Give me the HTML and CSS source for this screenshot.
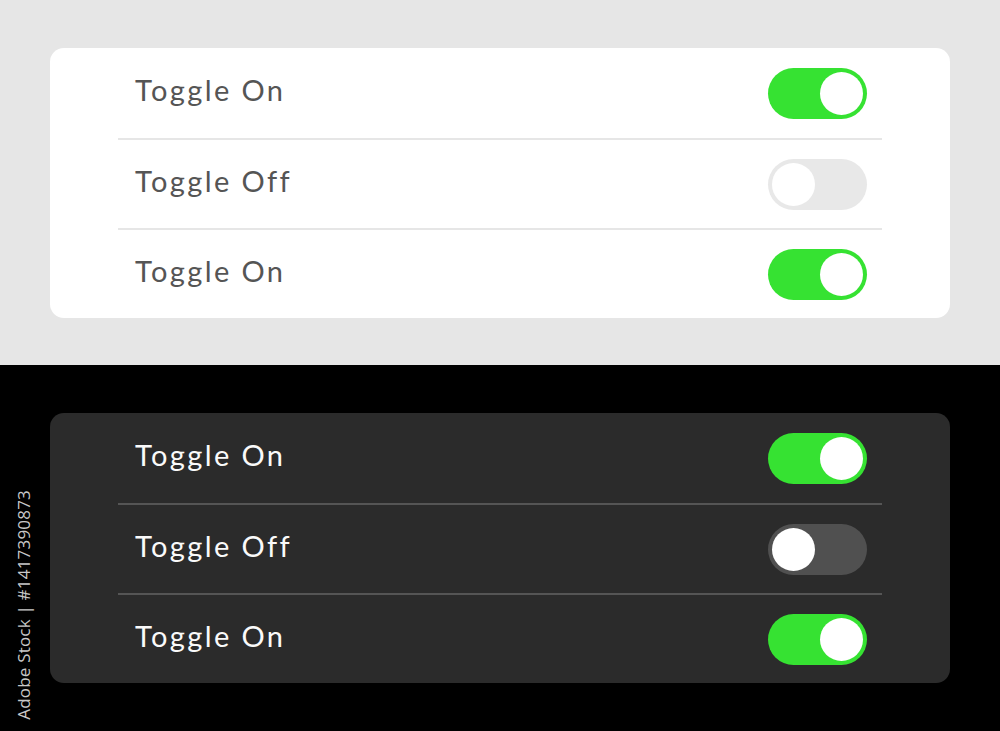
FILE: index.html
```html
<!DOCTYPE html>
<html lang="en">
<head>
    <meta charset="UTF-8">
    <title>Toggle Switches</title>
    <link rel="stylesheet" href="styles.css">
</head>
<body>
    <div class="theme light">
        <div class="card">
            <div class="row">
                <span class="label">Toggle On</span>
                <span class="switch on"><span class="knob"></span></span>
            </div>
            <div class="row">
                <span class="label">Toggle Off</span>
                <span class="switch"><span class="knob"></span></span>
            </div>
            <div class="row">
                <span class="label">Toggle On</span>
                <span class="switch on"><span class="knob"></span></span>
            </div>
        </div>
    </div>

    <div class="theme dark">
        <div class="card">
            <div class="row">
                <span class="label">Toggle On</span>
                <span class="switch on"><span class="knob"></span></span>
            </div>
            <div class="row">
                <span class="label">Toggle Off</span>
                <span class="switch"><span class="knob"></span></span>
            </div>
            <div class="row">
                <span class="label">Toggle On</span>
                <span class="switch on"><span class="knob"></span></span>
            </div>
        </div>
        <div class="stock-id">Adobe Stock | #1417390873</div>
    </div>
</body>
</html>
```

FILE: styles.css
```css
html, body {
    margin: 0;
    padding: 0;
}
body {
    font-family: Lato, "Open Sans", sans-serif;
    width: 1000px;
    height: 731px;
    overflow: hidden;
}
.theme {
    padding: 48px 50px 0 50px;
    position: relative;
}
.theme.light {
    background-color: #e6e6e6;
    height: 317px;
}
.theme.dark {
    background-color: #000;
    height: 318px;
}
.card {
    border-radius: 14px;
    padding: 0 68px;
    height: 270px;
}
.light .card {
    background-color: #fff;
}
.dark .card {
    background-color: #2b2b2b;
}
.row {
    height: 90px;
    box-sizing: border-box;
    display: flex;
    align-items: center;
    justify-content: space-between;
    padding: 0 15px 0 17px;
}
.row + .row {
    border-top: 2px solid #e6e6e6;
}
.dark .row + .row {
    border-top-color: #555;
}
.label {
    font-size: 29px;
    letter-spacing: 2.4px;
    color: #555;
    margin-bottom: 7px;
}
.dark .label {
    color: #fafafa;
}
.switch {
    width: 99px;
    height: 51px;
    border-radius: 26px;
    background-color: #e8e8e8;
    display: flex;
    align-items: center;
    padding: 0 4px;
    box-sizing: border-box;
}
.dark .switch {
    background-color: #505050;
}
.switch.on,
.dark .switch.on {
    background-color: #36e232;
    justify-content: flex-end;
}
.knob {
    width: 43px;
    height: 43px;
    border-radius: 50%;
    background-color: #fff;
}
.stock-id {
    position: absolute;
    left: 12px;
    top: 125px;
    writing-mode: vertical-rl;
    transform: rotate(180deg);
    font-family: "Open Sans", sans-serif;
    font-size: 17px;
    color: #c8c8c8;
    letter-spacing: 0.2px;
}
```
